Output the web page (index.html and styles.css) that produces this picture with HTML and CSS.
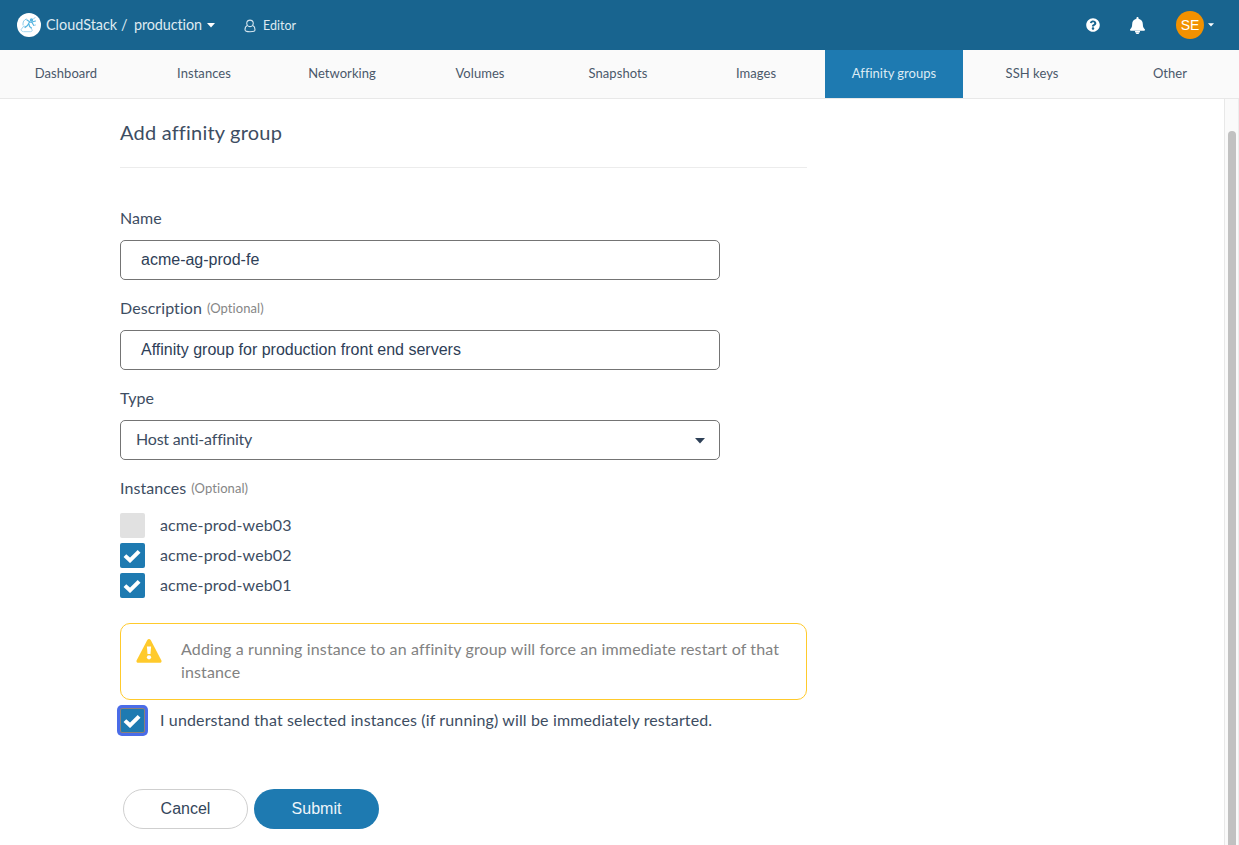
FILE: index.html
```html
<!DOCTYPE html>
<html lang="en">
<head>
<meta charset="utf-8">
<title>Add affinity group</title>
<link rel="stylesheet" href="styles.css">
</head>
<body>
<header class="topbar">
  <svg class="logo" viewBox="0 0 24 24"><circle cx="12" cy="12" r="12" fill="#fff"/><g fill="none" stroke="#56b5e0" stroke-linecap="round" stroke-linejoin="round"><path d="M6 18.600c-2.400-.3-2.500-3-.5-3.500.2-2 2.200-2.500 3.300-1.600M7 18.700h6.500c2.300-.2 2.200-2.500.6-3" stroke-width=".8" stroke="#8bcbea"/><path d="M8 14.500l2.500-2 2-3.500 2.500.5 1.500 2.500M12 11l.5 2.500 2 1.500M13 9l-3-2M15 9l3.500-1" stroke-width="1.200"/><path d="M6 12c-.5-3 1-5.500 3.500-6M16.500 12.500l2-.5M16.500 6l1.500-1.500" stroke-width=".7"/></g><circle cx="14.500" cy="7" r="1.700" fill="#56b5e0"/></svg>
  <span class="brand">CloudStack</span>
  <span class="slash">/</span>
  <span class="env">production</span>
  <svg class="caret" viewBox="0 0 8 5"><path d="M0 0h8L4 4.500z"/></svg>
  <svg class="user" viewBox="0 0 12 14"><g fill="none" stroke="#d5e5ef" stroke-width="1.100"><path d="M3.500 6.500C2 4.500 2.600 1.100 6 1.100s4 3.400 2.500 5.400C7.300 8 4.700 8 3.500 6.500z"/><path d="M3.400 6.500C1.500 7.200 1 9.200 1 10.700c0 1.600 1 2 5 2s5-.4 5-2c0-1.500-.5-3.500-2.400-4.200"/></g></svg>
  <span class="role">Editor</span>
  <div class="actions">
    <svg class="help" viewBox="0 0 512 512"><path fill="#fff" d="M504 256c0 137-111 248-248 248S8 393 8 256 119 8 256 8s248 111 248 248zM262.700 90c-54.500 0-89.300 23-116.500 63.800-3.500 5.300-2.400 12.400 2.700 16.300l34.700 26.300c5.200 3.900 12.600 3 16.700-2.100 17.900-22.700 30.100-35.800 57.300-35.800 20.400 0 45.700 13.100 45.700 33 0 15-12.400 22.700-32.500 34C247.100 238.500 216 255 216 296v4c0 6.600 5.400 12 12 12h56c6.600 0 12-5.400 12-12v-1.300c0-28.500 83.200-29.600 83.200-106.700 0-58-60.200-102-116.500-102zM256 338c-25.400 0-46 20.600-46 46s20.600 46 46 46 46-20.600 46-46-20.600-46-46-46z"/></svg>
    <svg class="bell" viewBox="0 0 448 512"><path fill="#fff" d="M224 512c35.300 0 64-28.700 64-64H160c0 35.300 28.700 64 64 64zm215.400-149.700c-19.300-20.800-55.500-52-55.500-154.300 0-77.700-54.500-139.900-128-155.200V32c0-17.700-14.300-32-32-32s-32 14.300-32 32v20.800C118.600 68.100 64.100 130.300 64.100 208c0 102.300-36.200 133.500-55.500 154.300C2.600 368.700 0 376.400 0 384c.1 16.400 13 32 32.100 32h383.800c19.100 0 32-15.600 32.100-32 0-7.600-2.700-15.300-8.600-21.700zM150 408h148v50H150z"/></svg>
    <span class="avatar">SE</span>
    <svg class="caret small" viewBox="0 0 8 5"><path d="M0 0h8L4 4.500z"/></svg>
  </div>
</header>
<nav class="tabs">
  <a>Dashboard</a><a>Instances</a><a>Networking</a><a>Volumes</a><a>Snapshots</a><a>Images</a><a class="active">Affinity groups</a><a>SSH keys</a><a>Other</a>
</nav>
<div class="body">
  <main class="content">
    <h1><span>Add affinity group</span></h1>
    <div class="field"><div class="label"><span>Name</span></div><div class="input"><span>acme-ag-prod-fe</span></div></div>
    <div class="field"><div class="label"><span>Description</span><small>(Optional)</small></div><div class="input"><span>Affinity group for production front end servers</span></div></div>
    <div class="field"><div class="label"><span>Type</span></div><div class="input select"><span>Host anti-affinity</span><svg class="arrow" viewBox="0 0 10 6"><path d="M0 0h10L5 5.500z"/></svg></div></div>
    <div class="label"><span>Instances</span><small>(Optional)</small></div>
    <div class="checks">
      <div class="row"><span class="box off"></span><span class="inst">acme-prod-web03</span></div>
      <div class="row"><span class="box"><svg viewBox="0 0 18 14"><path d="M1.900 6.600 7 11.300 16.100 2.300"/></svg></span><span class="inst">acme-prod-web02</span></div>
      <div class="row"><span class="box"><svg viewBox="0 0 18 14"><path d="M1.900 6.600 7 11.300 16.100 2.300"/></svg></span><span class="inst">acme-prod-web01</span></div>
    </div>
    <div class="warning">
      <svg viewBox="0 0 26 24"><path fill="#ffca2c" d="M11.300 1c.8-1.300 2.600-1.300 3.400 0l10.600 20.200c.7 1.400-.2 2.500-1.700 2.500H2.400c-1.500 0-2.400-1.100-1.700-2.500z"/><path d="M10.900 7.500h4.200l-.6 7.500h-3z" fill="#fff"/><circle cx="13" cy="18.300" r="2.100" fill="#fff"/></svg>
      <p><span>Adding a running instance to an affinity group will force an immediate restart of that</span><br><span>instance</span></p>
    </div>
    <div class="row confirm"><span class="box focus"><svg viewBox="0 0 18 14"><path d="M1.900 6.600 7 11.300 16.100 2.300"/></svg></span><span class="agree">I understand that selected instances (if running) will be immediately restarted.</span></div>
    <div class="buttons"><button class="cancel">Cancel</button><button class="submit">Submit</button></div>
  </main>
  <div class="scroll"><div class="thumb"></div></div>
</div>
</body>
</html>
```
FILE: styles.css
```css
* { box-sizing: border-box; }
body { margin: 0; height: 845px; overflow: hidden; display: flex; flex-direction: column; background: #fff; color: #3d4d62; font: 16px/20px Lato, "Noto Sans", sans-serif; font-variant-ligatures: none; }
svg { display: block; flex: none; }
span { white-space: nowrap; }
.topbar { height: 50px; flex: none; background: #18648f; color: #dfeaf1; display: flex; align-items: center; padding: 0 25px 0 17px; font-size: 14.4px; }
.logo { width: 24px; height: 24px; margin-right: 5px; }
.brand { width: 75px; }
.slash { width: 13px; }
.env { width: 73px; letter-spacing: -.1px; }
.caret { width: 8px; height: 5px; fill: #fff; }
.user { width: 12px; height: 14px; margin: 2px 7px 0 29px; }
.role { font-size: 12.500px; padding-top: 1px; }
.actions { margin-left: auto; display: flex; align-items: center; }
.help { width: 14px; height: 14px; }
.bell { width: 15px; height: 17px; margin: 0 31px 0 30.500px; }
.avatar { width: 28px; height: 28px; border-radius: 50%; background: #f29100; color: #fff; font: 14px/28px "Liberation Sans", sans-serif; text-align: center; }
.caret.small { width: 6px; height: 4px; margin-left: 4px; }
.tabs { height: 49px; flex: none; display: grid; grid-template-columns: repeat(9, 138px); background: #fafafa; border-bottom: 1px solid #e8e8e8; overflow: hidden; }
.tabs a { font-size: 13px; line-height: 47px; height: 48px; text-align: center; color: #4a586a; letter-spacing: .05px; margin-left: -3px; margin-right: 3px; }
.tabs .active { background: #1e7ab1; color: #dcebf4; letter-spacing: 0; }
.body { flex: 1; display: flex; justify-content: space-between; min-height: 0; }
.content { width: 687px; margin-left: 120px; }
h1 { margin: 0 0 40px; height: 69px; border-bottom: 1px solid #ececec; font-size: 20px; font-weight: 400; letter-spacing: .2px; line-height: 67px; }
.field { height: 90px; }
.label { height: 20px; margin-bottom: 12px; display: flex; gap: 5px; letter-spacing: .07px; }
small { font-size: 13px; color: #868686; }
.input { width: 600px; height: 40px; border: 1px solid #747474; border-radius: 5px; padding: 0 20px; color: #2e4057; font: 16px/38px "Liberation Sans", sans-serif; }
.select { color: #3d4d62; font: 16px/36px Lato, sans-serif; font-variant-ligatures: none; letter-spacing: -.2px; padding: 0 14px 0 15px; display: flex; justify-content: space-between; }
.arrow { width: 10px; height: 6px; fill: #2e4057; margin-top: 17px; }
.checks { display: grid; gap: 5px; padding-top: 3px; }
.row { display: flex; height: 25px; gap: 15px; line-height: 24px; letter-spacing: .1px; }
.box { width: 25px; height: 25px; flex: none; background: #1e7ab1; border-radius: 2px; display: grid; place-items: center; }
.box.off { background: #e1e1e1; }
.box svg { width: 18px; height: 14px; fill: none; stroke: #fff; stroke-width: 4; margin: 1px 1px 0 0; }
.box.focus { border: 1px solid #8b8178; box-shadow: 0 0 0 3px #4a6ce8; }
.warning { height: 77px; margin-top: 25px; border: 1px solid #ffca2c; border-radius: 10px; padding: 14px 15px; display: flex; gap: 19px; color: #828282; letter-spacing: .13px; }
.warning svg { width: 26px; height: 24px; margin: 1px .5px 0 -.5px; }
.warning p { margin: -1px 0 0; line-height: 23px; }
.confirm { margin-top: 8px; letter-spacing: .135px; }
.buttons { display: flex; gap: 6px; margin: 56px 0 0 3px; }
button { width: 125px; height: 40px; border-radius: 20px; font: 16px "Liberation Sans", sans-serif; padding: 0; }
.cancel { background: #fff; border: 1px solid #cfcfcf; color: #34465b; }
.submit { background: #1e7ab1; border: 0; color: #eef5fa; }
.scroll { width: 15px; background: #fafafa; border-left: 1px solid #e8e8e8; border-right: 1px solid #ededed; padding: 32px 2px 0 3px; }
.thumb { width: 8px; height: 740px; background: #c1c1c1; border-radius: 4px; }
```
